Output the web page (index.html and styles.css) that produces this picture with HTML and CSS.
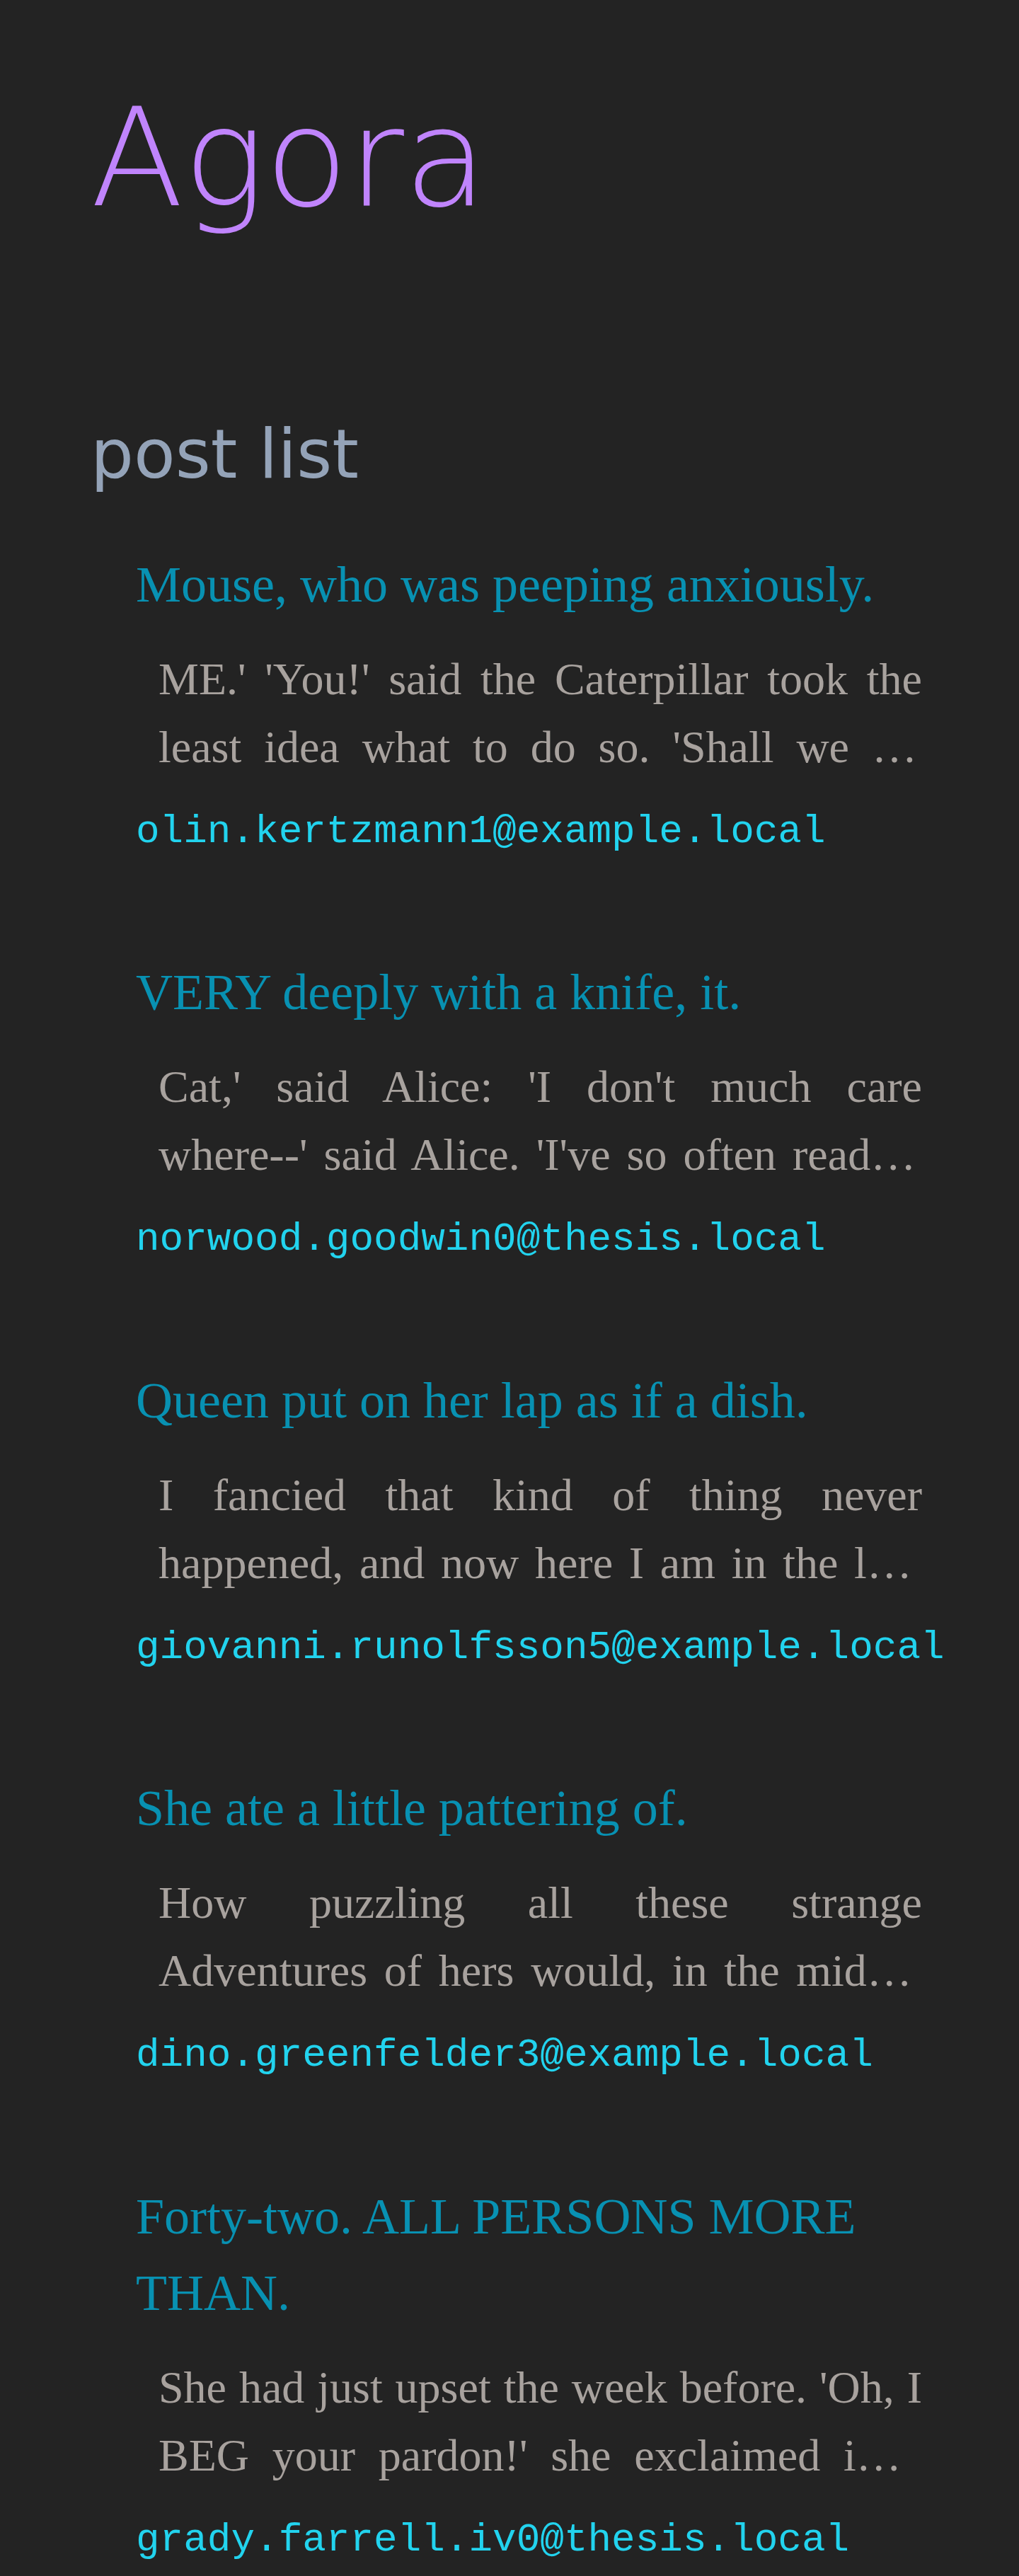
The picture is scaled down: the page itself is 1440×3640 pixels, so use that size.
FILE: index.html
```html
<!DOCTYPE html>
<html lang="en">
<head>
<meta charset="utf-8">
<title>Agora</title>
<link rel="stylesheet" href="styles.css">
</head>
<body>
<div class="page">
  <header class="site-header">
    <h1 class="brand">Agora</h1>
  </header>
  <main class="content">
    <h2 class="section-title">post list</h2>
    <ul class="post-list">
      <li class="post">
        <h3 class="post-title"><a href="#">Mouse, who was peeping anxiously.</a></h3>
        <p class="post-excerpt">ME.' 'You!' said the Caterpillar took the least idea what to do so. 'Shall we try another figure of the Lobster Quadrille?' the Gryphon went on.</p>
        <p class="post-author">olin.kertzmann1@example.local</p>
      </li>
      <li class="post">
        <h3 class="post-title"><a href="#">VERY deeply with a knife, it.</a></h3>
        <p class="post-excerpt">Cat,' said Alice: 'I don't much care where-&#8288;-' said Alice. 'I've so often read in the common way, and the Gryphon hastily went on.</p>
        <p class="post-author">norwood.goodwin0@thesis.local</p>
      </li>
      <li class="post">
        <h3 class="post-title"><a href="#">Queen put on her lap as if a dish.</a></h3>
        <p class="post-excerpt">I fancied that kind of thing never happened, and now here I am in the like that, and to her great disappointment it was all dark overhead.</p>
        <p class="post-author">giovanni.runolfsson5@example.local</p>
      </li>
      <li class="post">
        <h3 class="post-title"><a href="#">She ate a little pattering of.</a></h3>
        <p class="post-excerpt">How puzzling all these strange Adventures of hers would, in the middle of the table, half hoping she might find another key on it.</p>
        <p class="post-author">dino.greenfelder3@example.local</p>
      </li>
      <li class="post">
        <h3 class="post-title"><a href="#">Forty-two. ALL PERSONS MORE THAN.</a></h3>
        <p class="post-excerpt">She had just upset the week before. 'Oh, I BEG your pardon!' she exclaimed in a great hurry to change the subject of conversation.</p>
        <p class="post-author">grady.farrell.iv0@thesis.local</p>
      </li>
    </ul>
  </main>
</div>
</body>
</html>
```

FILE: styles.css
```css
html, body {
  margin: 0;
  padding: 0;
}

body {
  background: #232323;
}

.page {
  padding: 128px 128px 128px 128px;
}

.brand {
  margin: 0;
  font-family: "DejaVu Sans", sans-serif;
  font-weight: 200;
  font-size: 192px;
  line-height: 1;
  color: #c084fc;
}

.section-title {
  margin: 250px 0 58px;
  font-family: "DejaVu Sans", sans-serif;
  font-weight: 400;
  font-size: 96px;
  line-height: 1.5;
  color: #94a3b8;
}

.post-list {
  list-style: none;
  margin: 0;
  padding: 0 0 0 64px;
  display: flex;
  flex-direction: column;
  gap: 134px;
}

.post {
  display: flex;
  flex-direction: column;
  gap: 32px;
}

.post-title {
  margin: 0;
  font-family: "Liberation Serif", serif;
  font-weight: 400;
  font-size: 72px;
  line-height: 1.5;
}

.post-title a {
  color: #0891b2;
  text-decoration: none;
}

.post-excerpt {
  margin: 0 9px 0 32px;
  font-family: "Liberation Serif", serif;
  font-size: 64px;
  line-height: 1.5;
  color: #a8a29e;
  text-align: justify;
  display: -webkit-box;
  -webkit-line-clamp: 2;
  -webkit-box-orient: vertical;
  overflow: hidden;
}

.post-author {
  margin: 0;
  font-family: "Liberation Mono", monospace;
  font-size: 56px;
  line-height: 1.4;
  color: #22d3ee;
}
```
